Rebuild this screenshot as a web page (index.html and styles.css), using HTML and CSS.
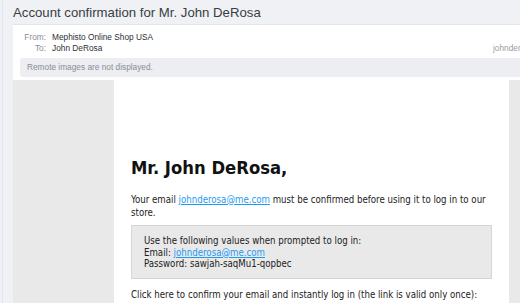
FILE: index.html
```html
<!DOCTYPE html>
<html lang="en">
<head>
    <meta charset="UTF-8">
    <meta name="viewport" content="width=device-width, initial-scale=1.0">
    <title>Account confirmation</title>
    <link rel="stylesheet" href="styles.css">
</head>
<body>
    <div class="viewer">
        <h1 class="subject">Account confirmation for Mr. John DeRosa</h1>
        <div class="message">
            <div class="headers">
                <div class="row">
                    <span class="label">From:</span>
                    <span class="value">Mephisto Online Shop USA</span>
                </div>
                <div class="row">
                    <span class="label">To:</span>
                    <span class="value">John DeRosa</span>
                    <span class="addr">johnderosa@me.com</span>
                </div>
                <div class="notice">Remote images are not displayed.</div>
            </div>
            <!-- rendered mail body -->
            <div class="mail">
                <div class="mail-col">
                    <h2>Mr. John DeRosa,</h2>
                    <p>Your email <a href="#">johnderosa@me.com</a> must be confirmed before using it to log in to our store.</p>
                    <div class="creds">
                        Use the following values when prompted to log in:<br>
                        Email: <a href="#">johnderosa@me.com</a><br>
                        Password: sawjah-saqMu1-qopbec
                    </div>
                    <p>Click here to confirm your email and instantly log in (the link is valid only once):</p>
                </div>
            </div>
        </div>
    </div>
</body>
</html>
```

FILE: styles.css
```css
* {
    box-sizing: border-box;
    margin: 0;
    padding: 0;
}

html, body {
    width: 100%;
    height: 100%;
    overflow: hidden;
}

body {
    background-color: #eff1f5;
    font-family: 'Liberation Sans', Arial, sans-serif;
}

.viewer {
    height: 100%;
    margin-left: 2px;
    border-left: 1px solid #e3e6eb;
    padding-left: 10px;
}

.subject {
    font-size: 13.2px;
    font-weight: normal;
    color: #3a3d42;
    line-height: 16px;
    padding-top: 5px;
    height: 24px;
}

.message {
    width: 597px;
    background-color: white;
    border-top: 1px solid #e2e5ea;
}

.headers {
    padding: 7px 0 3px 7px;
    font-size: 8.3px;
    color: #2e3033;
}

.row {
    display: flex;
    line-height: 11px;
    height: 11px;
}

.label {
    width: 32px;
    text-align: right;
    color: #8a8d93;
    padding-right: 6px;
}

.addr {
    margin-left: auto;
    padding-right: 38px;
    color: #9a9da3;
}

.notice {
    margin-top: 4px;
    height: 19px;
    line-height: 19px;
    padding-left: 7px;
    background-color: #eceef2;
    border-radius: 3px 0 0 3px;
    color: #8a8d93;
}

.mail {
    background-color: #e9e9e9;
    height: 260px;
}

.mail-col {
    width: 395px;
    height: 100%;
    margin: 0 auto;
    background-color: white;
    padding: 77px 17px 0 17px;
    font-family: 'DejaVu Sans Condensed', 'DejaVu Sans', Verdana, sans-serif;
    font-size: 9.6px;
    line-height: 13px;
    color: #222;
}

.mail-col h2 {
    font-size: 18.3px;
    line-height: 22px;
    color: #111;
    margin-bottom: 13.5px;
}

.mail-col p {
    margin-bottom: 6.5px;
}

.mail-col a {
    color: #1e9bf0;
}

.creds {
    background-color: #e9e9e9;
    border: 1px solid #d6d6d6;
    padding: 9px 12px 8.5px 12px;
    line-height: 11.5px;
    margin-bottom: 8.5px;
}
```
